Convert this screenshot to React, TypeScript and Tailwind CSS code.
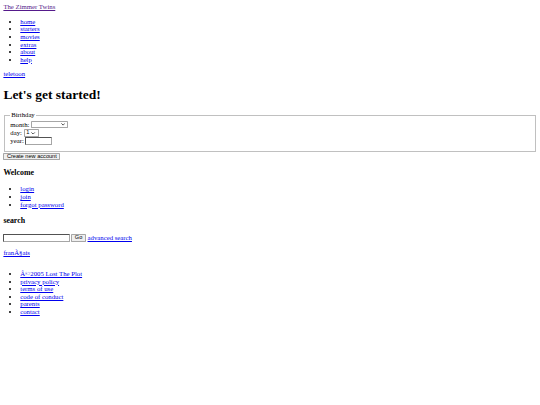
const link = 'text-[#0000ee] underline'

function Bullets({ items }: { items: string[] }) {
  return (
    <ul className="my-4 list-disc pl-10">
      {items.map((item) => (
        <li key={item}>
          <a href="#" className={link}>
            {item}
          </a>
        </li>
      ))}
    </ul>
  )
}

function Chevron() {
  return (
    <svg viewBox="0 0 10 6" className="h-[6px] w-[10px]" fill="none" stroke="#000" strokeWidth="1.6">
      <path d="M1 1l4 4 4-4" />
    </svg>
  )
}

function FakeSelect({ width, value }: { width: string; value?: string }) {
  return (
    <span
      className={`${width} inline-flex h-[18px] items-center justify-between rounded-[2px] border border-[#a6a6a6] bg-white pr-[5px] pl-[4px] font-['Liberation_Sans',sans-serif] text-[13.33px] leading-none`}
    >
      <span>{value}</span>
      <Chevron />
    </span>
  )
}

const textInput = 'h-[20px] rounded-[2px] border-2 border-[#a6a6a6] bg-white px-[2px] [border-style:inset]'
const btn =
  "h-[18px] rounded-[2px] border border-[#a6a6a6] bg-[#efefef] px-[6px] font-['Liberation_Sans',sans-serif] text-[13.33px] leading-none"

export default function App() {
  return (
    <div className="min-h-[960px] w-[1280px] bg-white p-2 font-['Liberation_Serif',serif] text-[16px] leading-[18px] text-black [zoom:0.421875]">
      <a href="#" className="text-[#551a8b] underline">
        The Zimmer Twins
      </a>
      <Bullets items={['home', 'starters', 'movies', 'extras', 'about', 'help']} />
      <a href="#" className={link}>
        teletoon
      </a>
      <h1 className="my-[21.44px] text-[32px] leading-[37px] font-bold">Let's get started!</h1>

      <form>
        <fieldset className="mx-[2px] border-2 border-[#c0c0c0] px-3 pt-[3px] pb-[12px] [border-style:groove]">
          <legend className="px-[2px] leading-[18px]">Birthday</legend>
          <div className="flex h-[20px] items-center gap-[4px]">
            month: <FakeSelect width="w-[88px]" />
          </div>
          <div className="flex h-[20px] items-center gap-[4px]">
            day: <FakeSelect width="w-[36px]" value="1" />
          </div>
          <div className="flex h-[20px] items-center gap-[4px]">
            year: <input type="text" className={`${textInput} w-[62px]`} />
          </div>
        </fieldset>
        <button type="button" className={`${btn} mt-[3px] block`}>
          Create new account
        </button>
      </form>

      <h3 className="my-[18.72px] text-[18.72px] leading-[22px] font-bold">Welcome</h3>
      <Bullets items={['login', 'join', 'forgot password']} />

      <h3 className="my-[18.72px] text-[18.72px] leading-[22px] font-bold">search</h3>
      <form className="my-4 flex h-[22px] items-center gap-[4px]">
        <input type="text" className={`${textInput} w-[157px]`} />
        <button type="button" className={btn}>
          Go
        </button>
        <a href="#" className={link}>
          advanced search
        </a>
      </form>

      <p className="my-4">
        <a href="#" className={link}>
          franÃ§ais
        </a>
      </p>

      <div className="mt-[31px]">
        <Bullets
          items={[
            'Â©2005 Lost The Plot',
            'privacy policy',
            'terms of use',
            'code of conduct',
            'parents',
            'contact',
          ]}
        />
      </div>
    </div>
  )
}
